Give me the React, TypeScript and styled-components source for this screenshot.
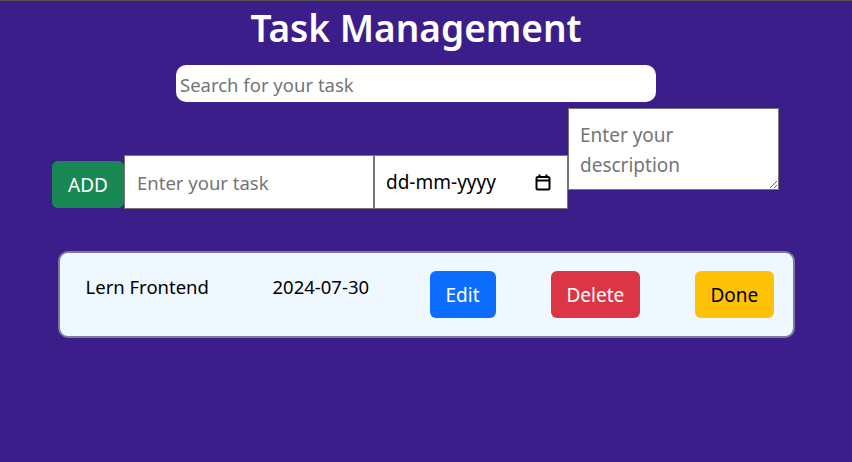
import React from "react";
import styled, { createGlobalStyle } from "styled-components";

const Global = createGlobalStyle`
  html, body { margin: 0; padding: 0; }
  body {
    background: #3c1e8a;
    font-family: "Noto Sans", "Open Sans", sans-serif;
  }
  * { box-sizing: border-box; }
`;

const Page = styled.div`
  min-height: 462px;
  border-top: 1px solid #555;
  background: #3c1e8a;
`;

const Header = styled.header`
  width: 832px;
  padding-top: 3px;
`;

const Title = styled.h1`
  margin: 0;
  font-size: 37px;
  line-height: 48px;
  font-weight: 600;
  color: #fff;
  text-align: center;
`;

const Search = styled.input`
  display: block;
  width: 480px;
  height: 37px;
  margin: 13px auto 0;
  padding: 2px 4px 0;
  border: none;
  border-radius: 10px;
  background: #fff;
  font-family: inherit;
  font-size: 18.5px;
  outline: none;
  &::placeholder { color: #757575; }
`;

const FormRow = styled.div`
  display: flex;
  align-items: flex-end;
  margin: 6px 0 0 52px;
`;

const Button = styled.button<{ $bg: string; $fg: string }>`
  height: 47px;
  padding: 0 16px;
  border: none;
  border-radius: 6px;
  background: ${(p) => p.$bg};
  color: ${(p) => p.$fg};
  font-family: inherit;
  font-size: 19px;
  line-height: 30px;
  cursor: pointer;
`;

const AddButton = styled(Button)`
  width: 72px;
  margin-bottom: 1px;
  padding: 0;
`;

const TaskInput = styled.input`
  width: 250px;
  height: 54px;
  padding: 0 12px;
  border: 1px solid #767676;
  background: #fff;
  font-family: inherit;
  font-size: 18.5px;
  outline: none;
  &::placeholder { color: #757575; }
`;

const DateBox = styled.label`
  display: flex;
  align-items: center;
  justify-content: space-between;
  width: 194px;
  height: 54px;
  padding: 0 16px 0 11px;
  border: 1px solid #767676;
  background: #fff;
  font-size: 19px;
  color: #000;
`;

const Desc = styled.textarea`
  width: 211px;
  height: 82px;
  margin-bottom: 19px;
  padding: 11px 11px;
  border: 1px solid #767676;
  background: #fff;
  font-family: inherit;
  font-size: 19px;
  line-height: 30px;
  outline: none;
  &::placeholder { color: #757575; }
`;

const Card = styled.div`
  display: grid;
  grid-template-columns: 187px 157px 121px 144px 1fr;
  align-items: start;
  width: 737px;
  margin: 42px auto 0;
  padding: 18px 19px 18px 26px;
  border: 2px solid #7c7a9e;
  border-radius: 10px;
  background: #f0f8ff;
`;

const Cell = styled.p`
  margin: 0;
  padding-top: 2px;
  font-size: 18.5px;
  line-height: 28px;
  color: #000;
`;

const Calendar = () => (
  <svg width="16" height="17" viewBox="0 0 16 17" fill="none" stroke="#000" strokeWidth="2">
    <rect x="1.5" y="3" width="13" height="12.5" rx="1.5" />
    <line x1="1.5" y1="6.5" x2="14.5" y2="6.5" />
    <line x1="4.5" y1="0.5" x2="4.5" y2="3.5" />
    <line x1="11.5" y1="0.5" x2="11.5" y2="3.5" />
  </svg>
);

export default function App() {
  return (
    <Page>
      <Global />
      <Header>
        <Title>Task Management</Title>
        <Search placeholder="Search for your task" />
      </Header>
      <FormRow>
        <AddButton $bg="#198754" $fg="#fff">ADD</AddButton>
        <TaskInput placeholder="Enter your task" />
        <DateBox>
          <span>dd-mm-yyyy</span>
          <Calendar />
        </DateBox>
        <Desc placeholder="Enter your description" />
      </FormRow>
      <Card>
        <Cell>Lern Frontend</Cell>
        <Cell>2024-07-30</Cell>
        <div><Button $bg="#0d6efd" $fg="#fff">Edit</Button></div>
        <div><Button $bg="#dc3545" $fg="#fff">Delete</Button></div>
        <div><Button $bg="#ffc107" $fg="#000">Done</Button></div>
      </Card>
    </Page>
  );
}
